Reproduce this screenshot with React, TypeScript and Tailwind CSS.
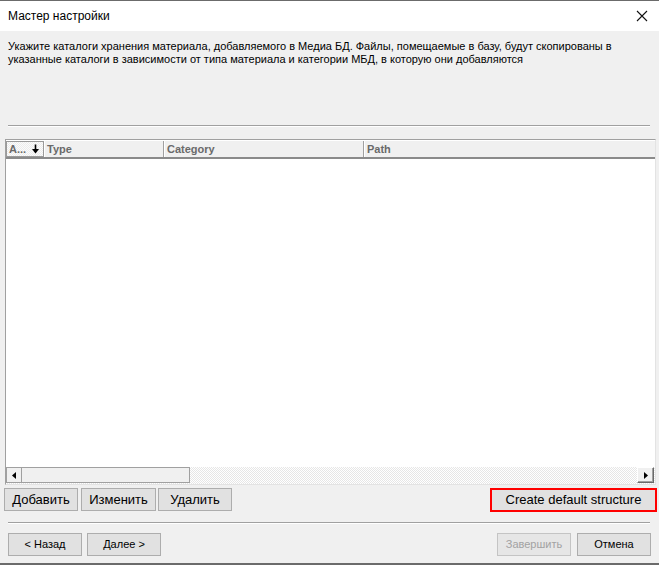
import React from "react";

const btn =
  "flex items-center justify-center bg-[#e1e1e1] border border-[#adadad] text-black";

function HeaderCell({ w, label }: { w: string; label: string }) {
  return (
    <div className={`${w} h-full flex items-center border-r border-r-[#a0a0a0] border-l border-l-white`}>
      <span className="pl-[2px] text-[11px] font-bold text-[#6a6a6a] leading-none">{label}</span>
    </div>
  );
}

export default function App() {
  return (
    <div
      className="w-[659px] h-[565px] flex flex-col bg-[#f0f0f0] overflow-hidden"
      style={{ fontFamily: '"Liberation Sans", Arial, sans-serif' }}
    >
      {/* Title bar */}
      <div className="h-[31px] bg-white border-t border-t-[#6b6b6b] flex items-center justify-between pl-[8px] pr-[10px] shrink-0">
        <span className="text-[12px] text-black">Мастер настройки</span>
        <svg width="12" height="12" viewBox="0 0 12 12" className="mr-[1px]">
          <path d="M1 1 L11 11 M11 1 L1 11" stroke="#111" strokeWidth="1.1" />
        </svg>
      </div>

      {/* Body */}
      <div className="flex-1 flex flex-col">
        <div className="mt-[9px] px-[8px] text-[11px] leading-[13px] text-black">
          <div>Укажите каталоги хранения материала, добавляемого в Медиа БД. Файлы, помещаемые в базу, будут скопированы в</div>
          <div>указанные каталоги в зависимости от типа материала и категории МБД, в которую они добавляются</div>
        </div>

        <div className="mt-[59px] ml-[8px] w-[642px] border-t border-t-[#a0a0a0] border-b border-b-white" />

        {/* Table */}
        <div className="mt-[12px] ml-[5px] w-[651px] h-[346px] border border-[#a0a0a0] border-r-[#e3e3e3] border-b-[#e3e3e3] flex flex-col bg-white">
          <div className="h-[19px] flex bg-[#f0f0f0] border-t border-t-white border-b-2 border-b-[#8a8a8a] shrink-0">
            <div className="w-[38px] h-full flex items-center justify-between border border-[#9a9a9a] bg-[repeating-conic-gradient(#ececec_0_25%,#fbfbfb_0_50%)] bg-[length:2px_2px] pr-[3px]">
              <span className="pl-[2px] text-[11px] font-bold text-[#6a6a6a] leading-none">A...</span>
              <svg width="9" height="10" viewBox="0 0 9 10">
                <path d="M4.5 0.5 V8" stroke="#000" strokeWidth="1.6" />
                <path d="M1 5 L4.5 9.5 L8 5 Z" fill="#000" />
              </svg>
            </div>
            <HeaderCell w="w-[120px]" label="Type" />
            <HeaderCell w="w-[200px]" label="Category" />
            <div className="flex-1 h-full flex items-center border-l border-l-white">
              <span className="pl-[2px] text-[11px] font-bold text-[#6a6a6a] leading-none">Path</span>
            </div>
          </div>

          <div className="flex-1 bg-white" />

          {/* Horizontal scrollbar */}
          <div className="h-[17px] flex items-stretch pb-[1px] bg-[repeating-conic-gradient(#e6e6e6_0_25%,#ffffff_0_50%)] bg-[length:2px_2px] shrink-0">
            <div className="w-[16px] flex items-center justify-center bg-[#f0f0f0] border border-[#a0a0a0]">
              <svg width="4" height="7" viewBox="0 0 4 7">
                <path d="M4 0 L0 3.5 L4 7 Z" fill="#000" />
              </svg>
            </div>
            <div className="w-[168px] bg-[#f0f0f0] border border-l-0 border-[#a0a0a0]" />
            <div className="flex-1" />
            <div className="w-[17px] mr-[1px] flex items-center justify-center bg-[#f0f0f0] border border-t-white border-l-white border-r-[#696969] border-b-[#696969] shadow-[inset_-1px_-1px_0_#a0a0a0]">
              <svg width="4" height="7" viewBox="0 0 4 7">
                <path d="M0 0 L4 3.5 L0 7 Z" fill="#000" />
              </svg>
            </div>
          </div>
        </div>

        {/* Action buttons */}
        <div className="mt-[3px] flex items-start pl-[4px] pr-[2px]">
          <div className={`${btn} w-[74px] h-[23px] text-[13px]`}>Добавить</div>
          <div className={`${btn} w-[75px] h-[23px] text-[13px] ml-[3px]`}>Изменить</div>
          <div className={`${btn} w-[74px] h-[23px] text-[13px] ml-[2px]`}>Удалить</div>
          <div className="flex-1" />
          <div className="w-[167px] h-[24px] border-2 border-[#ff0000] flex">
            <div className="flex-1 flex items-center justify-center bg-[#e1e1e1] text-[13px] text-black">
              Create default structure
            </div>
          </div>
        </div>

        <div className="mt-[10px] ml-[8px] w-[642px] border-t border-t-[#a0a0a0] border-b border-b-white" />

        {/* Navigation buttons */}
        <div className="mt-[9px] flex items-start pl-[8px]">
          <div className={`${btn} w-[74px] h-[23px] text-[11px]`}>&lt; Назад</div>
          <div className={`${btn} w-[74px] h-[23px] text-[11px] ml-[5px]`}>Далее &gt;</div>
          <div className="flex-1" />
          <div className="flex items-center justify-center w-[74px] h-[23px] text-[11px] bg-[#e6e6e6] border border-[#c4c4c4] text-[#a2a2a2]">
            Завершить
          </div>
          <div className={`${btn} w-[74px] h-[23px] text-[11px] ml-[6px] mr-[8px]`}>Отмена</div>
        </div>

        <div className="flex-1" />
        <div className="h-[2px] bg-[#6b6b6b]" />
      </div>
    </div>
  );
}
